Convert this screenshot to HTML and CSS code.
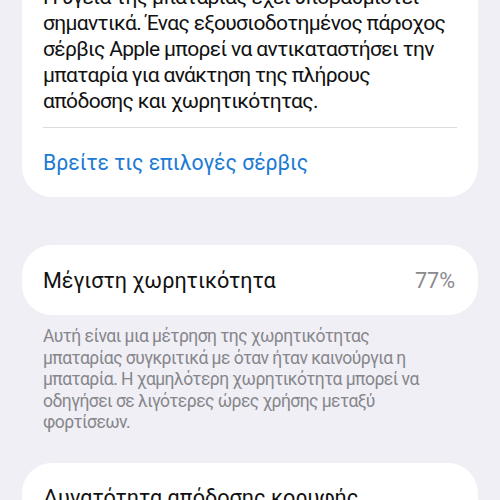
FILE: index.html
```html
<!DOCTYPE html>
<html lang="el">
<head>
    <meta charset="UTF-8">
    <meta name="viewport" content="width=device-width, initial-scale=1.0">
    <title>Υγεία μπαταρίας</title>
    <link rel="stylesheet" href="styles.css">
</head>
<body>
    <div id="page">
        <div class="card">
            <p class="card-text">
                Η υγεία της μπαταρίας έχει υποβαθμιστεί<br>
                σημαντικά. Ένας εξουσιοδοτημένος πάροχος<br>
                σέρβις Apple μπορεί να αντικαταστήσει την<br>
                μπαταρία για ανάκτηση της πλήρους<br>
                απόδοσης και χωρητικότητας.
            </p>
            <div class="separator"></div>
            <div class="link-row">
                <a href="#">Βρείτε τις επιλογές σέρβις</a>
            </div>
        </div>

        <div class="card row-card">
            <span class="row-label">Μέγιστη χωρητικότητα</span>
            <span class="row-value">77%</span>
        </div>
        <p class="footnote">
            Αυτή είναι μια μέτρηση της χωρητικότητας<br>
            μπαταρίας συγκριτικά με όταν ήταν καινούργια η<br>
            μπαταρία. Η χαμηλότερη χωρητικότητα μπορεί να<br>
            οδηγήσει σε λιγότερες ώρες χρήσης μεταξύ<br>
            φορτίσεων.
        </p>

        <div class="card last-card">
            <span class="row-label">Δυνατότητα απόδοσης κορυφής</span>
        </div>
    </div>
</body>
</html>
```

FILE: styles.css
```css
body {
    background-color: #f0eff5;
    font-family: Roboto, "Noto Sans", sans-serif;
    margin: 0;
    padding: 0;
    overflow: hidden;
    height: 500px;
}

#page {
    margin-top: -40px;
    display: flex;
    flex-direction: column;
}

.card {
    background-color: #ffffff;
    margin: 0 22px;
    border-radius: 30px;
    padding: 0 23px 0 21px;
}

.card-text {
    margin: 0;
    padding-top: 24px;
    padding-bottom: 13px;
    font-size: 21px;
    line-height: 26px;
    letter-spacing: -0.65px;
    color: #111111;
    white-space: nowrap;
}

.separator {
    height: 1px;
    background-color: #dadadf;
    margin-right: -2px;
}

.link-row {
    height: 69px;
    display: flex;
    align-items: center;
}

.link-row a {
    color: #1a7ad4;
    text-decoration: none;
    font-size: 21.2px;
}

.row-card {
    margin-top: 48px;
    height: 70px;
    flex-shrink: 0;
    display: flex;
    align-items: center;
    justify-content: space-between;
}

.row-label {
    font-size: 21.6px;
    color: #111111;
}

.row-value {
    font-size: 21.6px;
    color: #8a8a8e;
}

.footnote {
    margin: 11px 22px 0 43px;
    font-size: 17.5px;
    line-height: 21.5px;
    letter-spacing: -0.55px;
    color: #86868b;
    white-space: nowrap;
}

.last-card {
    margin-top: 29px;
    height: 80px;
    flex-shrink: 0;
    padding-top: 22px;
}
```
